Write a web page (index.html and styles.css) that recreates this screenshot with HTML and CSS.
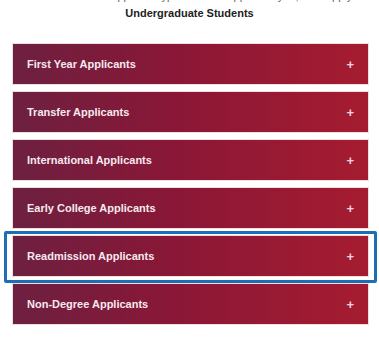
FILE: index.html
```html
<!DOCTYPE html>
<html>
<head>
<meta charset="utf-8">
<link rel="stylesheet" href="styles.css">
</head>
<body>
<div class="page">
  <p class="intro">Please select the applicant type that best applies to you, then apply.</p>
  <h2 class="title">Undergraduate Students</h2>
  <div class="list">
    <div class="item"><span>First Year Applicants</span><span class="plus">+</span></div>
    <div class="item"><span>Transfer Applicants</span><span class="plus">+</span></div>
    <div class="item"><span>International Applicants</span><span class="plus">+</span></div>
    <div class="item"><span>Early College Applicants</span><span class="plus">+</span></div>
    <div class="item"><span>Readmission Applicants</span><span class="plus">+</span></div>
    <div class="item"><span>Non-Degree Applicants</span><span class="plus">+</span></div>
  </div>
  <div class="highlight"></div>
</div>
</body>
</html>
```
FILE: styles.css
```css
html, body { margin: 0; padding: 0; background: #fff; }
.page {
  position: relative;
  width: 379px;
  height: 339px;
  overflow: hidden;
  font-family: "Liberation Sans", Arial, sans-serif;
}
.intro {
  margin: -10px 0 0;
  height: 13px;
  font-size: 11px;
  line-height: 13px;
  text-align: center;
  color: #666;
}
.title {
  margin: 3px 0 0;
  font-size: 11px;
  line-height: 14px;
  font-weight: bold;
  text-align: center;
  color: #222;
}
.list {
  display: flex;
  flex-direction: column;
  gap: 8px;
  margin: 24px 11px 0 13px;
}
.item {
  height: 40px;
  box-sizing: border-box;
  display: flex;
  align-items: center;
  justify-content: space-between;
  padding: 0 14px 0 14px;
  background: linear-gradient(90deg, #6d2040 0%, #8a1737 45%, #a51c30 100%);
  box-shadow: 0 0 0 1px #ecdde1;
  color: #f7e9ef;
  font-size: 11px;
  font-weight: bold;
}
.plus {
  font-size: 13px;
  font-weight: bold;
  color: #f6d3de;
}
.highlight {
  position: absolute;
  left: 4px;
  top: 231px;
  width: 373px;
  height: 52px;
  box-sizing: border-box;
  border: 3px solid #1f6db5;
  border-radius: 2px;
}
```
